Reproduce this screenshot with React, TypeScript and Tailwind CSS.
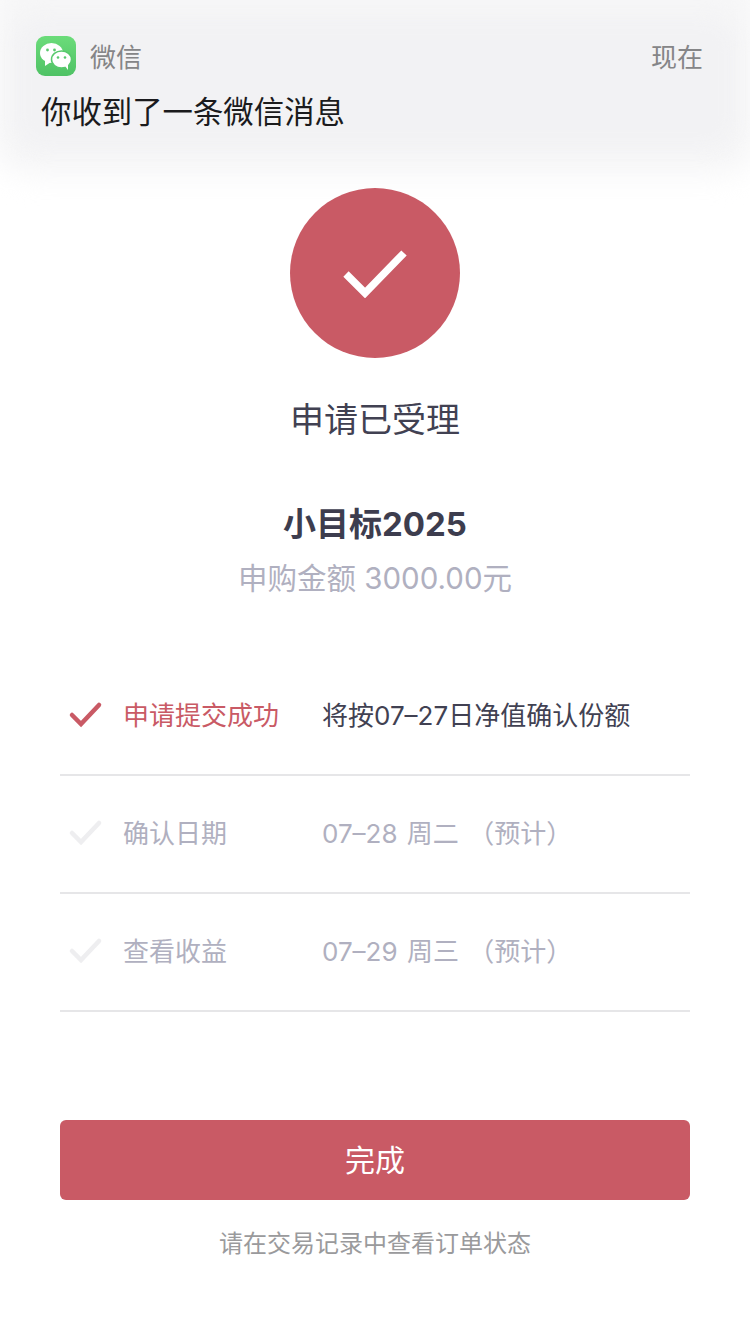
import React from "react";

const Check = ({ color, w = 4.5 }: { color: string; w?: number }) => (
  <svg width="36" height="30" viewBox="0 0 36 30" fill="none">
    <path d="M4 15 L13 24 L31 5" stroke={color} strokeWidth={w} strokeLinecap="round" strokeLinejoin="miter" />
  </svg>
);

const rows = [
  { title: "申请提交成功", desc: "将按07–27日净值确认份额", active: true },
  { title: "确认日期", desc: "07–28 周二 （预计）", active: false },
  { title: "查看收益", desc: "07–29 周三 （预计）", active: false },
];

export default function App() {
  return (
    <div className="relative w-[750px] h-[1334px] bg-white overflow-hidden font-['Inter','Noto_Sans_CJK_SC',sans-serif]">
      <div className="absolute left-[-10px] top-[-30px] w-[770px] h-[205px] rounded-[40px] bg-[#f6f6f7] blur-[14px]" />
      <div className="absolute left-[14px] top-[17px] w-[722px] h-[133px] rounded-[30px] bg-[#f2f2f4] blur-[8px]" />
      <div className="absolute left-[14px] top-[17px] w-[722px] h-[133px]">
        <div className="flex items-center justify-between pl-[22px] pr-[33px] pt-[17px]">
          <div className="flex items-center gap-[14px]">
            <div className="w-[40px] h-[40px] rounded-[9px] bg-gradient-to-b from-[#6bdc7a] to-[#4fc265] flex items-center justify-center">
              <svg width="34" height="30" viewBox="0 0 34 30">
                <ellipse cx="12.5" cy="12" rx="11.5" ry="10" fill="#fff" />
                <path d="M6 19 L6 25 L12 21 Z" fill="#fff" />
                <ellipse cx="22.5" cy="18.5" rx="10" ry="8.6" fill="#fff" stroke="#58c96d" strokeWidth="1.5" />
                <path d="M26 25 L29 29 L29 23 Z" fill="#fff" />
                <circle cx="8.5" cy="9" r="1.4" fill="#58c96d" />
                <circle cx="15.5" cy="9" r="1.4" fill="#58c96d" />
                <circle cx="19" cy="16.5" r="1.3" fill="#58c96d" />
                <circle cx="26" cy="16.5" r="1.3" fill="#58c96d" />
              </svg>
            </div>
            <span className="text-[26px] leading-[40px] pt-[4px] text-[#858587]">微信</span>
          </div>
          <span className="text-[26px] leading-[40px] pt-[4px] text-[#858587]">现在</span>
        </div>
        <div className="pl-[27px] mt-[12px] text-[30.4px] leading-[44px] text-[#1b1b1d]">你收到了一条微信消息</div>
      </div>

      <main className="relative flex flex-col items-center pt-[188px]">
        <div className="w-[170px] h-[170px] rounded-full bg-[#c95a65] flex items-center justify-center">
          <svg width="64" height="50" viewBox="0 0 64 50" fill="none">
            <path d="M3 26 L22 45 L61 5" stroke="#fff" strokeWidth="7.5" strokeLinejoin="miter" />
          </svg>
        </div>
        <div className="mt-[38px] text-[34px] leading-[48px] text-[#414152]">申请已受理</div>
        <div className="mt-[56px] text-[33px] leading-[48px] font-bold text-[#3d3d4e]">小目标2025</div>
        <div className="mt-[8px] text-[29.5px] leading-[44px] text-[#b0b0c0]">申购金额 3000.00元</div>

        <div className="mt-[58px] w-[630px] flex flex-col">
          {rows.map((r) => (
            <div key={r.title} className="h-[118px] pb-[2px] border-b-2 border-[#e6e6e8] flex items-center">
              <div className="w-[63px] pl-[8px] flex items-center">
                <Check color={r.active ? "#c95a65" : "#eeeef0"} />
              </div>
              <div className={`w-[199px] text-[26px] ${r.active ? "text-[#c95a65]" : "text-[#b0b0c0]"}`}>{r.title}</div>
              <div className={`text-[26px] [word-spacing:2px] ${r.active ? "text-[#414152]" : "text-[#b0b0c0]"}`}>{r.desc}</div>
            </div>
          ))}
        </div>

        <button className="mt-[108px] w-[630px] h-[80px] rounded-[6px] bg-[#c95a65] text-white text-[30px]">完成</button>
        <div className="mt-[26px] text-[24px] leading-[36px] text-[#9a9a9c]">请在交易记录中查看订单状态</div>
      </main>
    </div>
  );
}
